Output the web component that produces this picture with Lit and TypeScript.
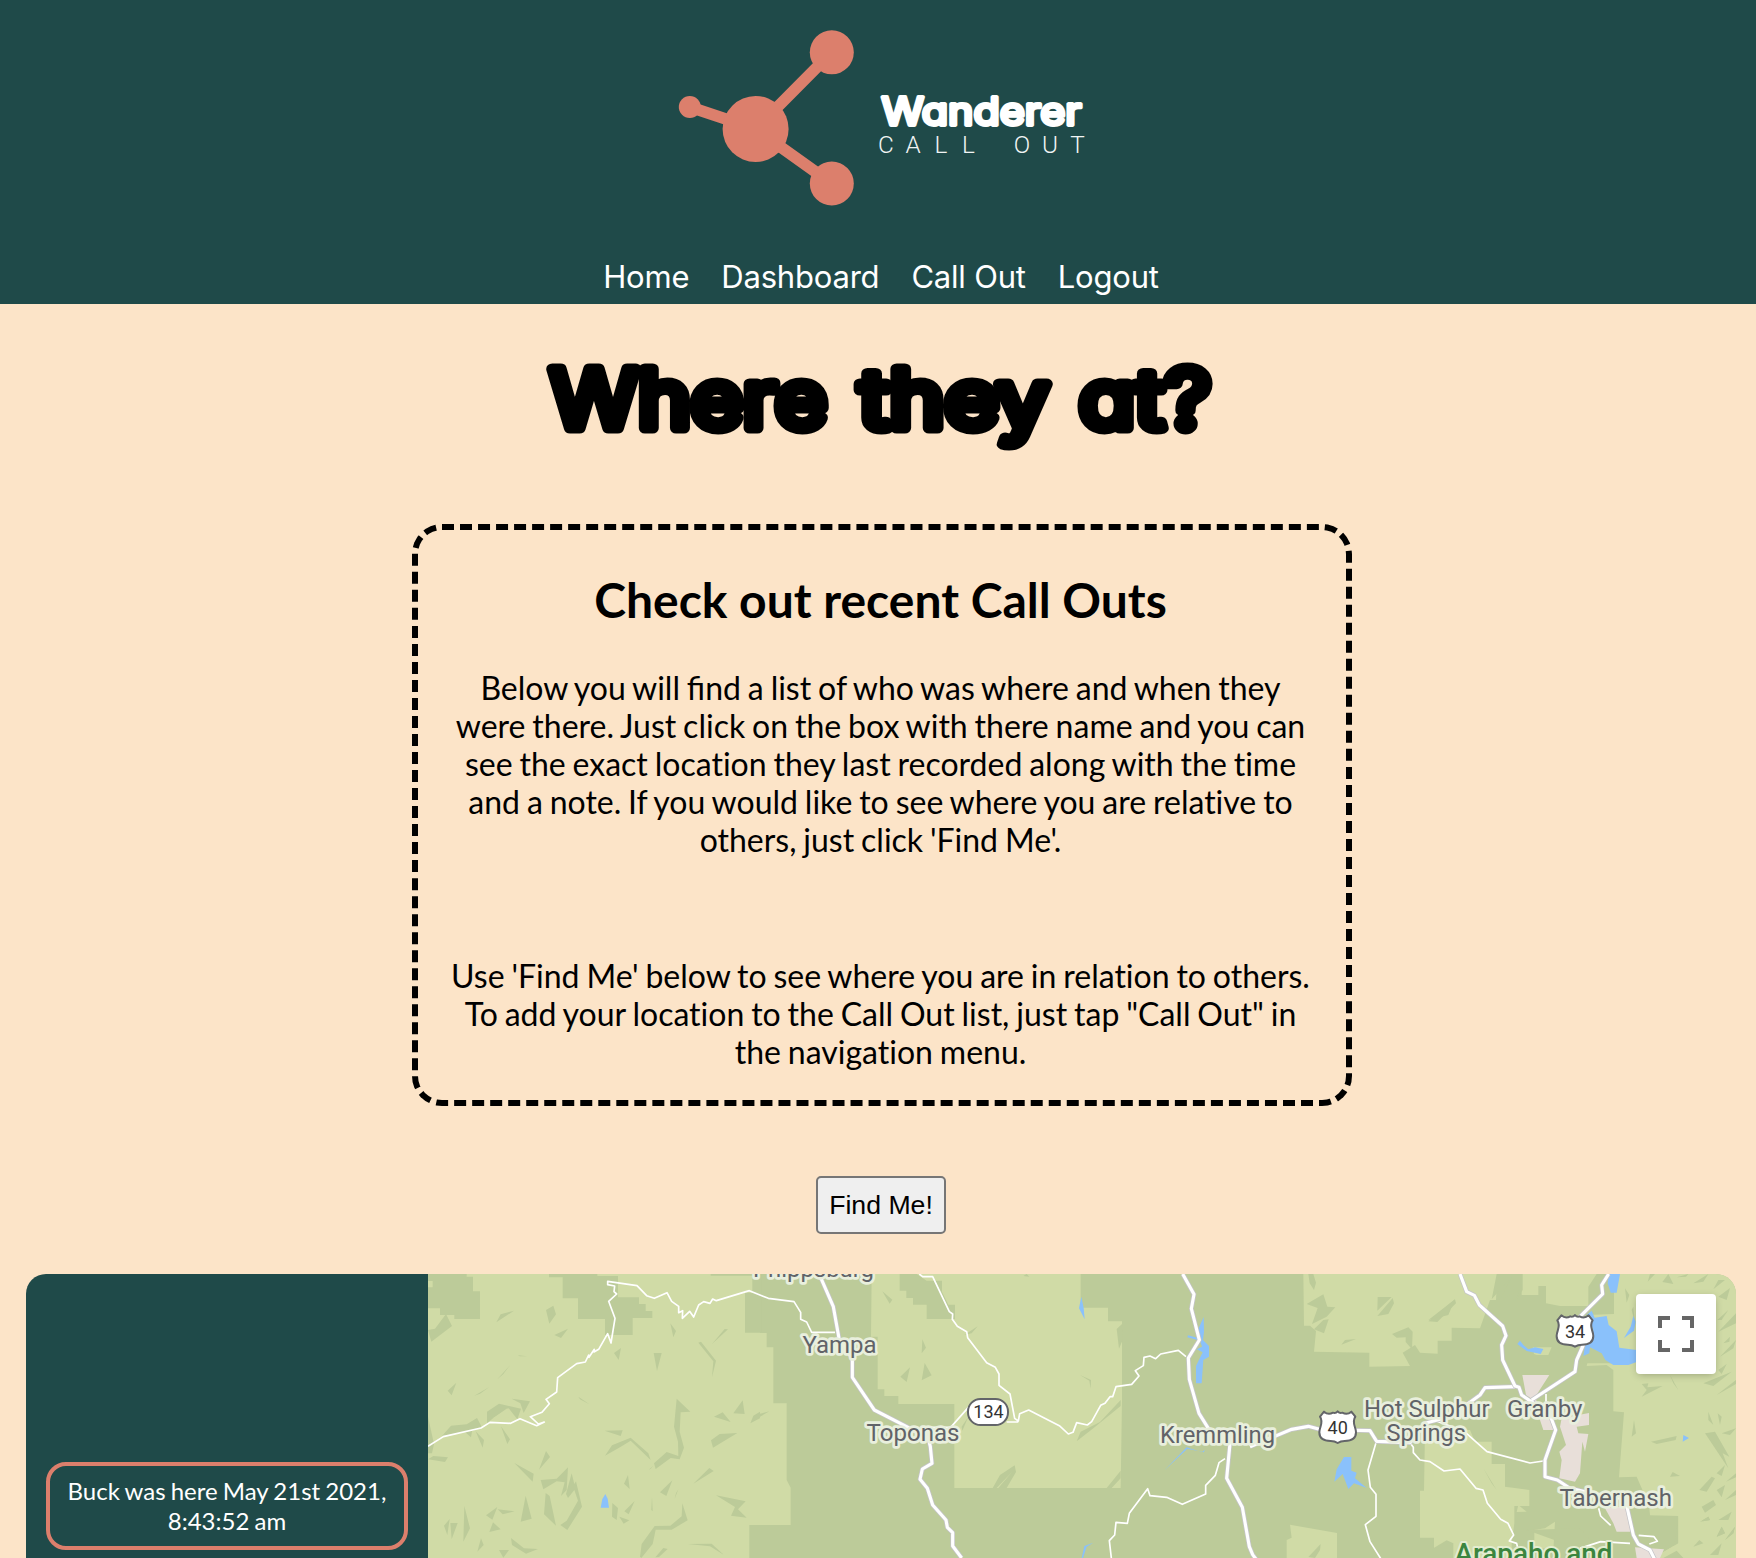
import { LitElement, html, svg, css } from "lit";
import { customElement } from "lit/decorators.js";

@customElement("brand-logo")
class BrandLogo extends LitElement {
  static styles = css`
    :host { display: block; line-height: 0; }
    .title { font: 400 38px Inter, "Noto Sans", sans-serif; font-feature-settings: "cv11"; fill: #fff; stroke: #fff; stroke-width: 3.8; stroke-linejoin: round; }
    .sub { font: 300 24.3px Roboto, sans-serif; fill: #f1f4f4; text-anchor: middle; }
  `;
  render() {
    return html`<svg width="600" height="240" viewBox="581 0 600 240">
      <g stroke="#dc7f6c" stroke-width="11.5" fill="#dc7f6c">
        <path d="M689.8 107L755.6 129L831.8 52.3M755.6 129L831.8 183.5" fill="none" />
        <g stroke="none">
          <circle cx="755.6" cy="129" r="33" />
          <circle cx="831.8" cy="52.3" r="22" />
          <circle cx="831.8" cy="183.5" r="22" />
          <circle cx="689.8" cy="107" r="11" />
        </g>
      </g>
      <text class="title" x="881.5" y="125.3" textLength="200" lengthAdjust="spacingAndGlyphs">Wanderer</text>
      <text class="sub" x="886 913 941 968.5 995 1022 1050 1077.5" y="152.5">CALL OUT</text>
    </svg>`;
  }
}

const shield = svg`<path d="M672 455L660 470C672 488 658 500 658 517C658 538 675 543 692 543C703 543 707 545 713 549C719 545 723 543 734 543C751 543 768 538 768 517C768 500 754 488 766 470L754 455C744 464 734 462 727 458Q719 461 713 454Q707 461 699 458C692 462 682 464 672 455Z" fill="#fff" stroke="#636569" stroke-width="6" stroke-linejoin="round"/>`;

@customElement("area-map")
class AreaMap extends LitElement {
  static styles = css`
    :host { display: block; position: relative; height: 284px; overflow: hidden; background: #bccb99; }
    .canvas { display: block; width: 1308px; height: 284px; }
    .light { fill: #d0dba6; }
    .dark { fill: #bccb99; }
    .water { fill: #8ac1fb; }
    .town { fill: #e8dfd9; }
    .minor { fill: none; stroke: #fff; stroke-width: 5; stroke-linejoin: round; }
    .casing { fill: none; stroke: #c4c4c8; stroke-width: 14; stroke-linejoin: round; }
    .major { fill: none; stroke: #fff; stroke-width: 9.5; stroke-linejoin: round; }
    .label { font: 400 24px Roboto, sans-serif; fill: #616368; stroke: #e9efdd; stroke-width: 5.5; stroke-linejoin: round; paint-order: stroke; }
    .park { font: 500 27px Roboto, sans-serif; fill: #3b853f; stroke: #e3ecd0; stroke-width: 4; stroke-linejoin: round; paint-order: stroke; }
    .num { font: 400 18px Roboto, sans-serif; fill: #333; text-anchor: middle; }
    .full { position: absolute; top: 20px; right: 20px; width: 80px; height: 80px; padding: 0; border: 0; border-radius: 4px; background: #fff; box-shadow: 0 2px 8px -2px rgba(0, 0, 0, 0.3); display: flex; align-items: center; justify-content: center; }
  `;

  private land() {
    return svg`
    <g transform="translate(420 1260) scale(.33333333)">
      <path class="light" d="M0 42H1020V219H1040V262H1060V430H1100V660L1112 683V795H988V894H0Z"/>
      <path class="dark" d="M24 42H140V50H159V94H180V177H103V165H60V145H24V82H38V63H24ZM387 42H532V48H594V112H657V132H677V153H697V174H638V225H555V177H474V115H428V52H387ZM872 42H1025V218H975V98H997V47H872Z"/>
      <path class="dark" d="M24 210L45 206L78 162L96 198L34 245ZM229 187L242 163L282 152ZM378 150L400 137L408 163L388 191ZM403 225L444 206L423 234ZM293 286L322 289L300 289ZM232 358L270 316L250 342ZM163 407L208 381L180 401ZM83 392L109 368L95 406ZM275 416L330 424L311 459L301 430ZM201 455L237 431L303 446L292 478L266 445L220 474L201 490ZM66 528L93 497L140 493L171 474L185 500L156 514L153 532L136 517ZM167 514L192 540L188 563ZM243 499L270 538L262 552ZM24 470L42 552L36 580H24ZM24 598L40 588L84 592L75 606ZM283 609L341 641L338 665ZM378 573L390 591L357 629ZM362 660L410 656L444 622L440 690L423 708L434 667L410 664L370 688ZM455 640L463 672L468 664L486 740L442 810L421 795L440 782L474 722L463 690L444 714L438 702ZM377 699L389 708L408 797L372 763ZM317 707L335 776L302 785ZM133 738L150 805L130 845ZM232 741L198 766L217 779ZM233 748L284 754L248 763ZM219 787L242 808L208 816ZM89 777L72 797L82 825ZM91 789H113L95 838ZM183 835L191 855L172 875ZM273 834L312 865L354 867L318 881L276 855ZM237 870H267L250 893ZM582 279L603 264L596 300ZM701 279H725L711 333ZM751 190L768 213L760 232ZM835 248L843 245L888 302L876 352L880 304ZM876 252L914 207L924 208ZM475 410L508 433L480 418ZM554 512L608 511L602 528ZM555 587L576 556L632 533L685 580L692 600L632 542L600 562ZM770 416L811 455L782 457L779 515L792 563L779 598L752 594L707 627L702 610L740 576L775 588L774 545L762 500ZM882 470L908 457L932 486ZM940 460L968 421L974 462ZM991 490L1000 467L1020 455V475ZM873 541L899 522L952 519L879 563ZM820 671L868 624L881 633ZM612 671L624 645L629 687ZM720 697L757 661L739 708ZM686 629L700 617L692 626ZM696 710L698 754L694 750ZM775 688L764 716L768 700ZM577 729L594 744L590 780L576 770ZM613 754L644 723L626 763ZM598 770L628 781L611 791ZM787 730L803 781L755 809H707L698 852L664 894L660 890L665 852L704 798L751 797L785 769ZM888 706L977 724L954 748L980 773L933 767L945 741ZM706 892L730 864L743 867L717 891ZM803 852L875 851L912 885L870 859Z"/>
      <path class="light" d="M220 474L262 445L278 468L235 480Z"/>
      <path class="water" d="M542 743L547 717L556 702L563 716L567 743Z"/>
    </g>
    <g transform="translate(760 1260) scale(.33333333)">
      <path class="light" d="M335 42H962V143H1044V184H1086V420L1082 684H583V432H415V408H373V388H353V230H333Z"/>
      <path class="dark" d="M419 42V92H439V114H459V134H500V177H585V134H565L546 95V62H500L470 42ZM367 94L397 119L389 131ZM487 238L498 263L485 280ZM421 350L450 322L440 366ZM485 361L494 309L515 346ZM613 225L653 199L635 220ZM605 500L625 470L607 512ZM950 544L962 515L1020 486L1082 420V438L1000 505ZM698 684L720 645L764 616L768 636L740 684H715L756 636L710 684ZM0 470L28 454L0 461ZM960 345L993 360L992 386L988 362ZM790 48L800 42L808 50ZM1070 207L1086 192L1088 240L1077 266ZM1040 684L1082 632V655L1055 684Z"/>
      <path class="water" d="M964 110L971 144L974 178L957 145ZM965 894L973 858L1000 848L980 860L969 894Z"/>
    </g>
    <g transform="translate(1100 1260) scale(.33333333)">
      <path class="light" d="M610 42H1192L1188 120H1170L1140 205L1055 203V242H1013V281L960 278L945 255L908 278L930 318L808 320V278L642 275L648 213L630 197H612ZM570 794L711 819V894H560V840L575 833ZM975 510H1110L1125 545H1175V612H1215V680L1288 690V738H1243V790L1235 850V894H1002V833H960V692H972Z"/>
      <path class="dark" d="M625 42H640L648 68L642 90L629 70ZM620 132L670 103L682 140L706 142L680 170L636 192L653 144ZM670 180L686 178L672 220L642 208ZM833 111H875L832 152ZM878 114L882 130L865 162L832 168ZM724 254L735 240L768 237ZM876 222L925 202L938 215L936 268L917 246V232L890 233ZM985 184L1015 160L1065 118L1068 130L1012 186ZM985 894L1000 865L1040 841L1060 850V894ZM625 891L662 852L660 870L645 894Z"/>
      <path class="water" d="M311 171L312 215L309 240L327 258V290L310 300L305 370H288V318L308 277L290 268L306 260L300 242L262 232L264 226L294 234L296 205ZM192 632L262 566L312 577L314 569L306 577L260 562ZM732 591H754V632L770 638L765 655L800 684L762 670L745 687L728 642L703 665L710 628Z"/>
    </g>
    <g transform="translate(1420 1260) scale(.33333333)">
      <path class="light" d="M305 42H530L505 80V138H420L378 130V78H355V105H305ZM582 42H948V894H700L775 850V768L690 766L687 735L650 650L597 652L612 457L580 454V330L560 315L500 318L520 230L500 165L582 162ZM338 262H395L385 285H350L342 282ZM295 735L320 755L290 756ZM343 810L375 805L405 785L400 870L343 860Z"/>
      <path class="dark" d="M775 768V894H948V850L760 880ZM320 810L480 805L520 850H430ZM230 42L215 118L275 52L240 120L300 90L285 125L308 90V42ZM25 180L105 118L85 165ZM190 625L230 690L215 670ZM690 42H705L683 65ZM727 66L745 42L760 72ZM770 52L805 42L798 50ZM820 70L865 42L850 65ZM895 60L915 60L880 88ZM785 140L835 110L815 130ZM615 85L628 105L620 128ZM640 140L645 190L635 150ZM895 110L930 84L920 120ZM892 180L925 150L905 180ZM895 215L948 160V190ZM910 250L930 230L928 245ZM900 290L948 240L940 265ZM895 330L920 312L905 342ZM665 372L685 370L682 382L728 378L665 410L680 390ZM750 345L775 390L760 370ZM850 370L935 335L880 378ZM890 405L948 360V372ZM865 455L880 495L865 480ZM893 460L905 470L900 495ZM855 520L885 515L928 590L908 580L925 625ZM905 520L948 505L930 525ZM635 530L642 480L648 520ZM693 545L770 528L767 540L710 552ZM750 650L758 636L780 648ZM838 690L875 650L885 655L860 695ZM890 640L915 615L905 648ZM845 740L880 720L888 735L855 758ZM890 690L915 675L905 712ZM918 665L948 640V652ZM915 720L948 690V705ZM840 785L865 770L870 780ZM895 780L935 755L925 780ZM890 830L905 800L915 820ZM915 840L945 800L940 820ZM820 860L838 840L850 850ZM530 80H582V160H530ZM500 195L520 250L580 310H480Z"/>
      <path class="light" d="M775 768H840L880 850L948 830V894H700L775 850Z"/>
      <path class="dark" d="M890 830L905 800L915 820ZM915 840L945 800L940 820ZM820 860L838 840L850 850ZM840 785L865 770L870 780ZM870 885L905 850L895 885ZM730 894L770 872L790 894Z"/>
      <path class="water" d="M566 42H600L590 98H572L563 70ZM515 152L524 173L560 168L566 195L590 214L598 263L650 270V306L625 315H580L556 300L545 280L510 262L508 280L490 288L495 255L520 212L510 180L500 165ZM640 168L647 185L642 212L612 234L632 200ZM300 242L310 255L325 268L345 262L370 267L362 282L320 273L292 252ZM790 525L807 534L788 545Z"/>
      <path class="town" d="M307 345H388L345 412L365 460L392 470L412 510H370L360 480L340 420L318 405ZM425 475L507 459V495L470 500L475 520L505 522L495 575L487 545L480 640L465 665L418 655L425 600L418 575L438 555L420 500ZM555 745L618 738L640 815H590L580 790ZM645 862L732 868L720 894H650Z"/>
    </g>`;
  }

  private roads() {
    const b = ["M170 25L220 140L237 235L262 270L277 300V352L343 450L440 500L505 535L511 560L516 610L487 627L480 658L502 685L518 735L558 780L562 802L578 818V858L605 894"];
    const c = ["M248 42L282 103L274 146L298 240L265 294L268 358L297 460L325 505L390 550L380 655L427 742L448 860L458 884L470 900", "M450 560L575 508L625 499L658 508L713 510L810 512L830 544L930 548L975 490L1050 470L1140 405L1155 383L1245 380"];
    const d = ["M120 42L140 95L163 106L178 135L248 198L258 227L245 255L248 300L285 378L297 382L305 405L338 428L390 465L407 510L375 600V650L412 660L450 685L540 705L605 715L622 745L640 825L655 852L690 870L705 900", "M566 42L545 75L548 102L480 170L465 215L490 255L470 300L465 335L335 420"];
    const lines = (ds: string[], cls: string) => ds.map((p) => svg`<path class=${cls} d=${p}/>`);
    const sets: [number, string[]][] = [[760, b], [1100, c], [1420, d]];
    return svg`
    <g transform="translate(420 1260) scale(.33333333)">
      <path class="minor" d="M24 559L70 530L183 504L210 487L272 490L300 476L350 497L373 486L355 492L331 470L366 457L388 431L378 418L410 396L413 353L470 311L496 306L506 285L507 292L523 268L522 276L536 268L563 221L573 249L585 175L566 124L590 102L582 95L584 78L563 74V64L651 77L680 107L703 115L741 98L755 124L776 139V158L788 152L787 175L809 154L821 171L836 135L851 125L870 130L878 117L889 122L988 92L1045 115L1122 125L1142 157V178L1160 186L1175 217H1245"/>
    </g>
    <g transform="translate(760 1260) scale(.33333333)">
      <path class="minor" d="M478 42L488 50H518L568 155L578 162L577 178L592 199L620 215L623 233L680 308L706 322L717 342V376L750 402L764 475L775 483L779 461L806 450L898 497L925 522L939 517L950 488L982 495L995 485L1022 436L1035 430L1050 410H1058L1068 380L1115 373L1137 348L1126 332L1150 317L1152 292L1170 288L1187 296L1202 282L1255 271L1278 290M500 502H572L625 442M740 486H775M1395 596L1377 608L1366 646L1337 676V702L1267 733L1220 712L1170 707L1163 686L1108 760L1102 790L1068 787L1064 825L1048 842L1054 894"/>
    </g>
    <g transform="translate(1100 1260) scale(.33333333)">
      <path class="minor" d="M828 548L804 630L811 682L828 703V769L796 794L810 845L845 900M930 548L940 562V578L960 600L990 605L1032 633L1080 627L1128 685L1149 690L1162 730L1202 778L1224 790L1241 825L1228 843L1250 850L1255 872M1000 480L1090 512L1161 575L1290 609L1330 603M1338 402V425M1496 745L1502 768L1532 796M1440 865L1502 845L1590 850M1616 826L1662 830L1672 844L1648 852"/>
    </g>
    ${sets.map(([x, p]) => svg`<g transform="translate(${x} 1260) scale(.33333333)">${lines(p, "casing")}${lines(p, "major")}</g>`)}
    <g transform="translate(1100 1260) scale(.33333333)">${shield}</g>
    <g transform="translate(1337.3 1163.7) scale(.33333333)">${shield}</g>
    <rect x="968" y="1399" width="40" height="26" rx="12.5" fill="#fff" stroke="#636569" stroke-width="2"/>
    <text class="num" x="988.5" y="1418">134</text>
    <text class="num" x="1337.7" y="1434">40</text>
    <text class="num" x="1575" y="1338.3">34</text>`;
  }

  private labels() {
    const items: [string, number, number, number][] = [
      ["Phippsburg", 753, 1277.3, 121], ["Yampa", 802.5, 1353.3, 74], ["Toponas", 866.5, 1441, 93],
      ["Kremmling", 1160, 1443.3, 115], ["Hot Sulphur", 1364, 1417.3, 125.5], ["Springs", 1386.5, 1441.3, 79.5],
      ["Granby", 1507, 1417.3, 75.5], ["Tabernash", 1559.5, 1505.5, 112.5],
    ];
    return items.map(([t, x, y, w]) => svg`<text class="label" x=${x} y=${y} textLength=${w} lengthAdjust="spacingAndGlyphs">${t}</text>`);
  }

  render() {
    return html`<svg class="canvas" viewBox="428 1274 1308 284">
        ${this.land()}${this.roads()}${this.labels()}
        <text class="park" x="1454.5" y="1563" textLength="158" lengthAdjust="spacingAndGlyphs">Arapaho and</text>
      </svg>
      <button class="full" aria-label="Toggle fullscreen view">
        <svg width="36" height="36" viewBox="0 0 18 18" fill="#666"><path d="M0 0v6h2V2h4V0zM12 0v2h4v4h2V0zM16 12v4h-4v2h6v-6zM2 12H0v6h6v-2H2z"/></svg>
      </button>`;
  }
}

@customElement("app-root")
class AppRoot extends LitElement {
  static styles = css`
    :host { display: block; height: 1558px; overflow: hidden; background: #fce4c8; color: #000; font-family: Lato, sans-serif; }
    .header { box-sizing: border-box; height: 304px; padding-left: 6px; background: #1f4a49; display: flex; flex-direction: column; align-items: center; }
    .nav { display: flex; gap: 32px; margin-top: 18px; font: 400 31px/38px Inter, sans-serif; letter-spacing: -0.2px; color: #fff; }
    .main { padding-left: 6px; display: flex; flex-direction: column; align-items: center; }
    .title { margin: 0; height: 220px; line-height: 0; }
    .display { font: 400 81px Inter, "Noto Sans", sans-serif; font-feature-settings: "cv11"; stroke: #000; stroke-width: 11; stroke-linejoin: round; }
    .intro { box-sizing: border-box; width: 940px; height: 582px; margin-left: 2px; padding: 41px 31px 0 28px; border: 6px dashed #000; border-radius: 30px; text-align: center; }
    .intro h2 { margin: 0; font-size: 48px; line-height: 58px; font-weight: 700; }
    .intro p { margin: 40px 0 0; font-size: 32px; line-height: 38px; word-spacing: -1.3px; font-variant-ligatures: no-common-ligatures; }
    .intro .joined { font-variant-ligatures: common-ligatures; }
    .intro .second { margin-top: 98px; }
    .find { box-sizing: border-box; width: 130px; height: 58px; margin: 70px 0 40px; padding: 0; border: 2px solid #767676; border-radius: 5px; background: #efefef; color: #000; font: 26.67px "Liberation Sans", sans-serif; }
    .panel { display: grid; grid-template-columns: 402px 1308px; width: 1710px; height: 284px; border-radius: 20px 20px 0 0; overflow: hidden; }
    .list { padding: 188px 20px 0; background: #1f4a49; }
    .entry { box-sizing: border-box; height: 88px; border: 4px solid #dc7f6c; border-radius: 20px; padding: 10px 8px; text-align: center; color: #fff; font-size: 24px; line-height: 30px; word-spacing: -1px; }
  `;
  render() {
    return html`
      <header class="header">
        <brand-logo></brand-logo>
        <nav class="nav"><span>Home</span><span>Dashboard</span><span>Call Out</span><span>Logout</span></nav>
      </header>
      <main class="main">
        <h1 class="title">
          <svg width="720" height="220" viewBox="521 304 720 220">
            <text class="display" x="550" y="428" textLength="277" lengthAdjust="spacingAndGlyphs">Where</text>
            <text class="display" x="859" y="428" textLength="190" lengthAdjust="spacingAndGlyphs">they</text>
            <text class="display" x="1079" y="428" textLength="132" lengthAdjust="spacingAndGlyphs">at?</text>
          </svg>
        </h1>
        <section class="intro">
          <h2>Check out recent Call Outs</h2>
          <p>Below you will <span class="joined">find</span> a list of who was where and when they were there. Just click on the box with there name and you can see the exact location they last recorded along with the time and a note. If you would like to see where you are relative to others, just click 'Find Me'.</p>
          <p class="second">Use 'Find Me' below to see where you are in relation to others. To add your location to the Call Out list, just tap "Call Out" in the navigation menu.</p>
        </section>
        <button class="find">Find Me!</button>
        <section class="panel">
          <aside class="list"><div class="entry">Buck was here May 21st 2021, 8:43:52 am</div></aside>
          <area-map></area-map>
        </section>
      </main>`;
  }
}
